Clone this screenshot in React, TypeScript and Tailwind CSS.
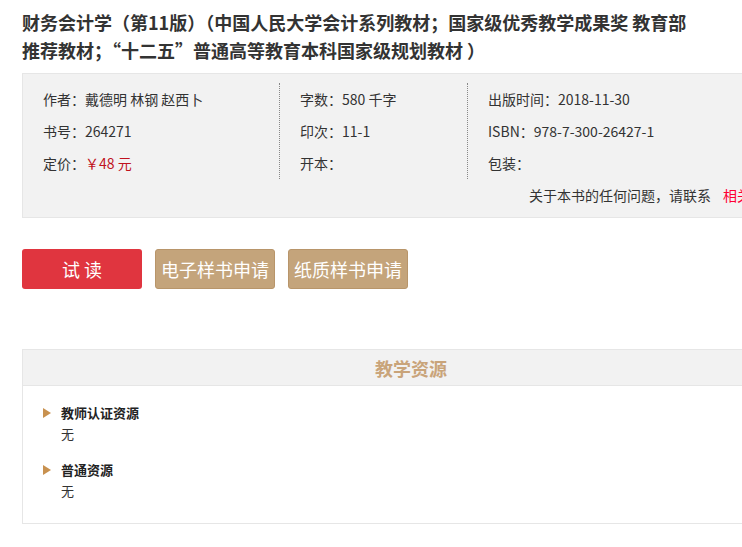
import React from 'react';

const font = { fontFamily: '"Noto Sans CJK SC", "Noto Sans", sans-serif' };

const infoCols = [
  [
    { label: '作者：', value: '戴德明 林钢 赵西卜' },
    { label: '书号：', value: '264271' },
    { label: '定价：', value: '￥48 元', red: true },
  ],
  [
    { label: '字数：', value: '580 千字' },
    { label: '印次：', value: '11-1' },
    { label: '开本：', value: '' },
  ],
  [
    { label: '出版时间：', value: '2018-11-30' },
    { label: 'ISBN：', value: '978-7-300-26427-1' },
    { label: '包装：', value: '' },
  ],
];

const resources = [
  { title: '教师认证资源', body: '无' },
  { title: '普通资源', body: '无' },
];

const App: React.FC = () => {
  return (
    <div className="w-[742px] h-[547px] overflow-hidden bg-white text-[#333]" style={font}>
      <div className="pl-[22px]">
        {/* Title */}
        <h1 className="w-[672px] pt-2 text-[18px] leading-[28px] font-bold text-[#333]">
          财务会计学（第11版）（中国人民大学会计系列教材；国家级优秀教学成果奖 教育部推荐教材；“十二五”普通高等教育本科国家级规划教材 ）
        </h1>

        {/* Info box */}
        <div className="mt-[9px] w-[778px] border border-[#e6e6e6] bg-[#f2f2f2] px-5 pt-[9px] pb-[6px] text-[14px]">
          <div className="flex">
            {infoCols.map((col, i) => (
              <div
                key={i}
                className={
                  i === 0
                    ? 'w-[237px] border-r border-dotted border-[#888]'
                    : i === 1
                    ? 'w-[188px] pl-5 border-r border-dotted border-[#888]'
                    : 'pl-5'
                }
              >
                {col.map(row => (
                  <div key={row.label} className="h-8 leading-8 whitespace-nowrap">
                    {row.label}
                    <span className={row.red ? 'text-[#c0121e]' : ''}>{row.value}</span>
                  </div>
                ))}
              </div>
            ))}
          </div>
          <div className="flex justify-end h-8 leading-8">
            <span>关于本书的任何问题，请联系</span>
            <span className="ml-3 text-[#ff0033]">相关编辑</span>
          </div>
        </div>

        {/* Buttons */}
        <div className="mt-[31px] flex gap-[13px]">
          <button className="w-[120px] h-10 rounded-[3px] bg-[#e0353f] text-white text-[18px]">试 读</button>
          <button className="w-[120px] h-10 rounded-[3px] bg-[#c4a47b] border border-[#b8956a] text-white text-[18px]">电子样书申请</button>
          <button className="w-[120px] h-10 rounded-[3px] bg-[#c4a47b] border border-[#b8956a] text-white text-[18px]">纸质样书申请</button>
        </div>

        {/* Resources */}
        <div className="mt-[60px] w-[778px] border border-[#e6e6e6]">
          <div className="h-9 bg-[#f2f2f2] border-b border-[#e6e6e6] text-center text-[18px] leading-9 font-bold text-[#c9a47a]">
            教学资源
          </div>
          <div className="pl-5 pt-[17px] pb-[22px] flex flex-col gap-4">
            {resources.map(r => (
              <div key={r.title}>
                <div className="flex items-center h-5">
                  <svg width="8" height="10" viewBox="0 0 8 10" className="mr-[10px]">
                    <polygon points="0,0 8,5 0,10" fill="#c8914f" />
                  </svg>
                  <span className="text-[13px] font-bold text-[#222]">{r.title}</span>
                </div>
                <div className="pl-[18px] h-5 leading-5 text-[13px] text-[#333] mt-px">{r.body}</div>
              </div>
            ))}
          </div>
        </div>
      </div>
    </div>
  );
};

export default App;
